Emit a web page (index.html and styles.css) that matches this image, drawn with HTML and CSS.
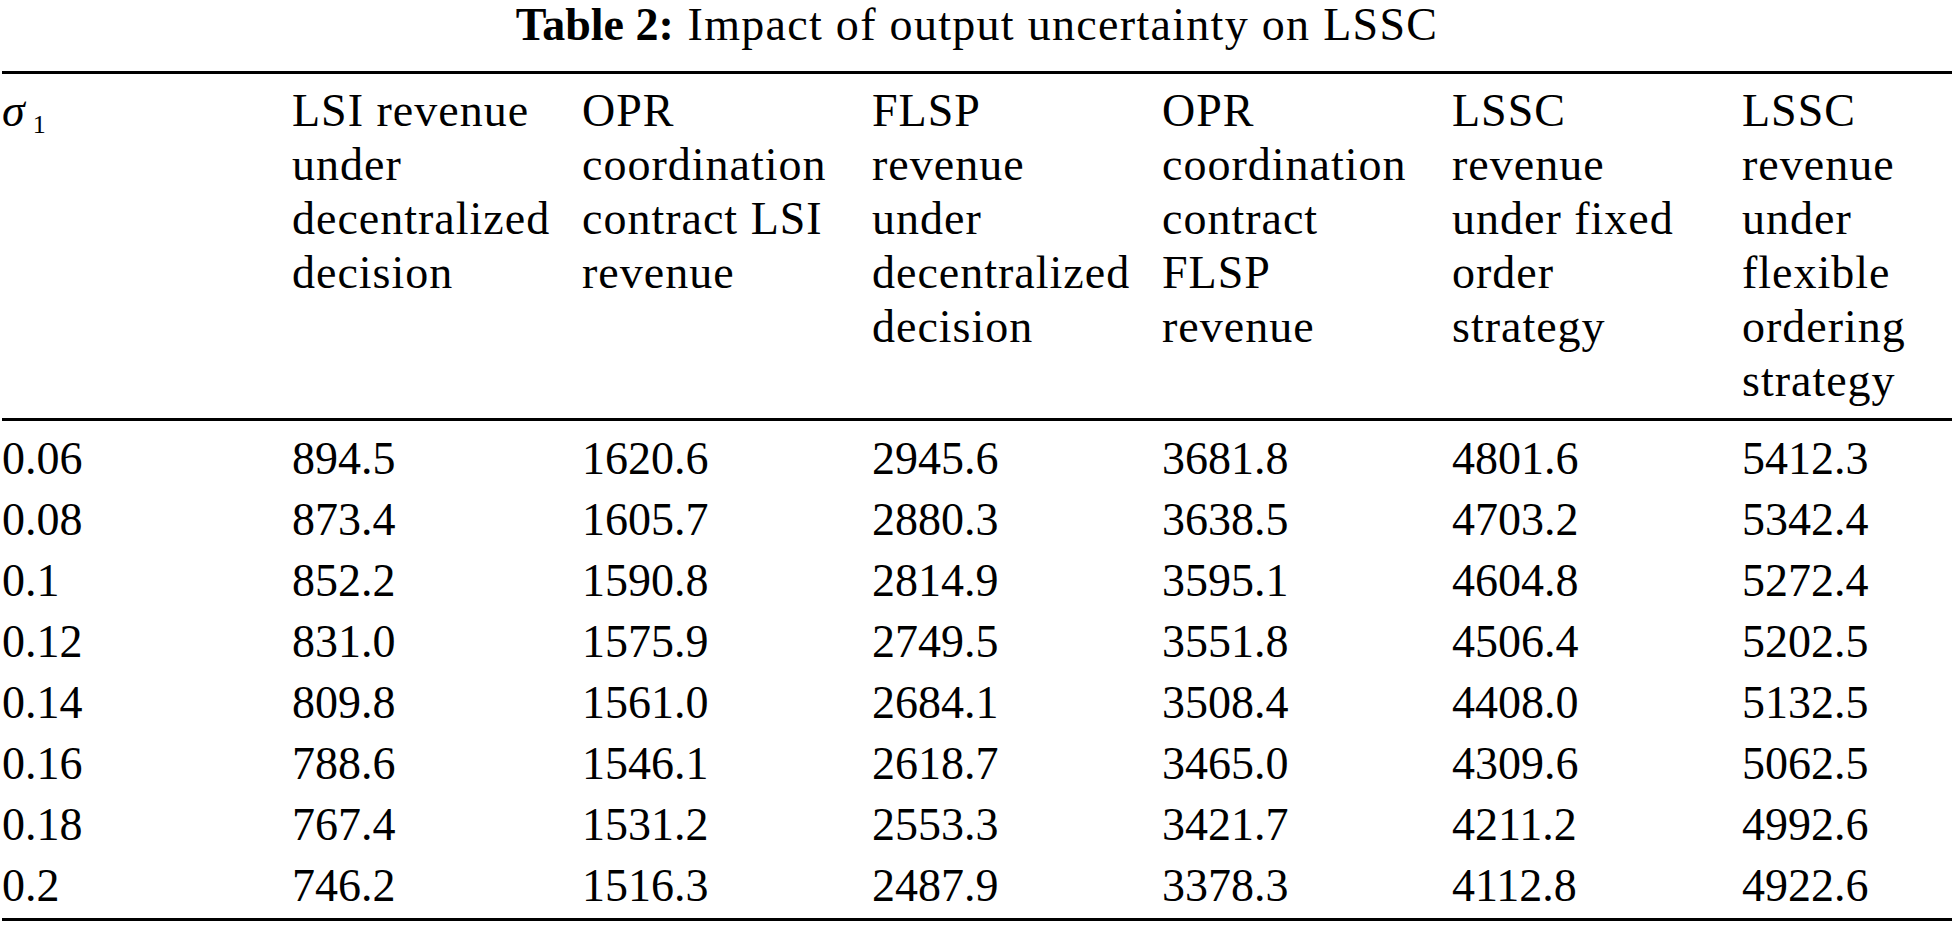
FILE: index.html
```html
<!DOCTYPE html>
<html lang="en">
<head>
<meta charset="utf-8">
<title>Table 2: Impact of output uncertainty on LSSC</title>
<link rel="stylesheet" href="styles.css">
</head>
<body>
<table class="data-table">
  <caption class="table-caption"><b class="caption-label">Table 2:</b> Impact of output uncertainty on LSSC</caption>
  <colgroup>
    <col class="col-std"><col class="col-std"><col class="col-std"><col class="col-std"><col class="col-std"><col class="col-std"><col class="col-last">
  </colgroup>
  <thead>
    <tr>
      <th class="head-cell"><span class="sigma">σ</span><span class="sub">1</span></th>
      <th class="head-cell">LSI revenue<br>under<br>decentralized<br>decision</th>
      <th class="head-cell">OPR<br>coordination<br>contract LSI<br>revenue</th>
      <th class="head-cell">FLSP<br>revenue<br>under<br>decentralized<br>decision</th>
      <th class="head-cell">OPR<br>coordination<br>contract<br>FLSP<br>revenue</th>
      <th class="head-cell">LSSC<br>revenue<br>under fixed<br>order<br>strategy</th>
      <th class="head-cell">LSSC<br>revenue<br>under<br>flexible<br>ordering<br>strategy</th>
    </tr>
  </thead>
  <tbody>
    <tr class="row-first"><td>0.06</td><td>894.5</td><td>1620.6</td><td>2945.6</td><td>3681.8</td><td>4801.6</td><td>5412.3</td></tr>
    <tr><td>0.08</td><td>873.4</td><td>1605.7</td><td>2880.3</td><td>3638.5</td><td>4703.2</td><td>5342.4</td></tr>
    <tr><td>0.1</td><td>852.2</td><td>1590.8</td><td>2814.9</td><td>3595.1</td><td>4604.8</td><td>5272.4</td></tr>
    <tr><td>0.12</td><td>831.0</td><td>1575.9</td><td>2749.5</td><td>3551.8</td><td>4506.4</td><td>5202.5</td></tr>
    <tr><td>0.14</td><td>809.8</td><td>1561.0</td><td>2684.1</td><td>3508.4</td><td>4408.0</td><td>5132.5</td></tr>
    <tr><td>0.16</td><td>788.6</td><td>1546.1</td><td>2618.7</td><td>3465.0</td><td>4309.6</td><td>5062.5</td></tr>
    <tr><td>0.18</td><td>767.4</td><td>1531.2</td><td>2553.3</td><td>3421.7</td><td>4211.2</td><td>4992.6</td></tr>
    <tr class="row-last"><td>0.2</td><td>746.2</td><td>1516.3</td><td>2487.9</td><td>3378.3</td><td>4112.8</td><td>4922.6</td></tr>
  </tbody>
</table>
</body>
</html>
```

FILE: styles.css
```css
html, body {
  margin: 0;
  padding: 0;
  background: #ffffff;
}

body {
  font-family: "Liberation Serif", "Times New Roman", serif;
  font-size: 46px;
  color: #000000;
}

.data-table {
  margin-left: 2px;
  width: 1950px;
  table-layout: fixed;
  border-collapse: separate;
  border-spacing: 0;
}

.col-std {
  width: 290px;
}

.table-caption {
  caption-side: top;
  text-align: center;
  line-height: 46px;
  padding: 2px 0 23px 0;
  white-space: nowrap;
  letter-spacing: 1.3px;
}

.caption-label {
  font-weight: bold;
  letter-spacing: 0;
  padding-right: 1px;
}

.head-cell {
  font-weight: normal;
  text-align: left;
  vertical-align: top;
  line-height: 54px;
  white-space: nowrap;
  letter-spacing: 1px;
  padding: 10px 0 10px 0;
  border-top: 3px solid #000;
  border-bottom: 3px solid #000;
}

.sigma {
  font-style: italic;
  letter-spacing: 0;
}

.sub {
  font-size: 26px;
  position: relative;
  top: 7px;
  margin-left: 8px;
}

.data-table td {
  padding: 0;
  line-height: 61px;
  text-align: left;
  white-space: nowrap;
}

.row-first td {
  padding-top: 7px;
}

.row-last td {
  padding-bottom: 2px;
  border-bottom: 3px solid #000;
}
```
